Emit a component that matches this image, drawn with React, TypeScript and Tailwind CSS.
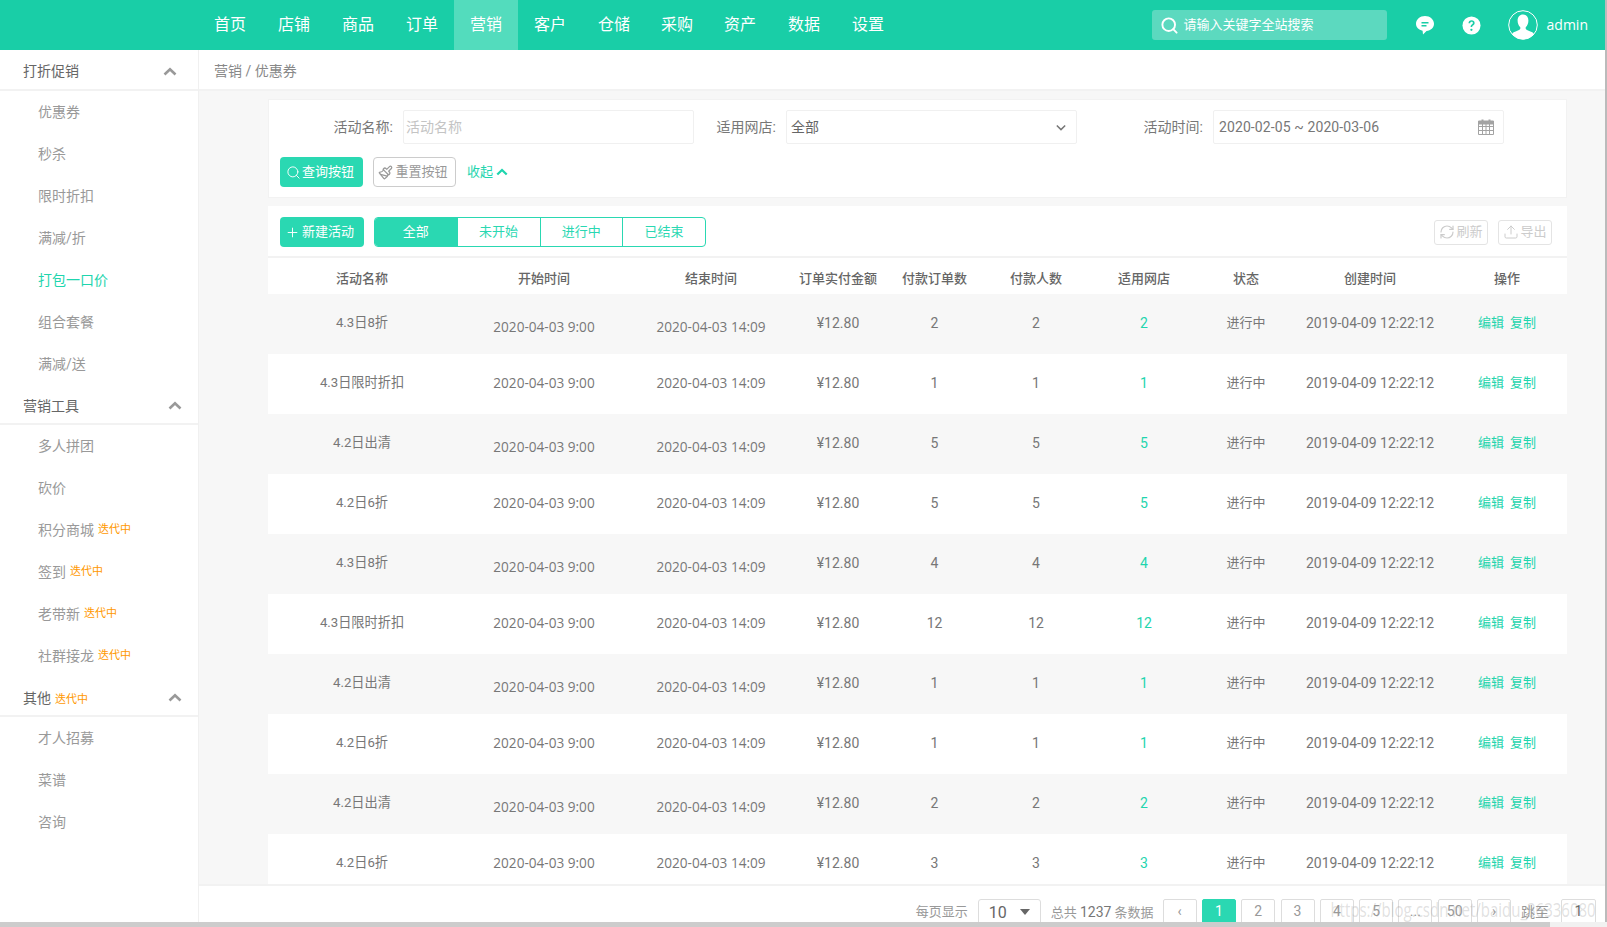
import { Search, RefreshCw, Upload, Plus, Paintbrush } from "lucide-react";

const font = "font-['Roboto','Noto_Sans_CJK_SC',sans-serif]";

const navItems = ["首页", "店铺", "商品", "订单", "营销", "客户", "仓储", "采购", "资产", "数据", "设置"];

type SideItem = { label: string; wip?: boolean; active?: boolean };
type SideGroup = { title: string; wip?: boolean; chevron: string; items: SideItem[] };

const sideGroups: SideGroup[] = [
    {
        title: "打折促销",
        chevron: "mr-[21px]",
        items: [
            { label: "优惠券" },
            { label: "秒杀" },
            { label: "限时折扣" },
            { label: "满减/折" },
            { label: "打包一口价", active: true },
            { label: "组合套餐" },
            { label: "满减/送" },
        ],
    },
    {
        title: "营销工具",
        chevron: "mr-[16px]",
        items: [
            { label: "多人拼团" },
            { label: "砍价" },
            { label: "积分商城", wip: true },
            { label: "签到", wip: true },
            { label: "老带新", wip: true },
            { label: "社群接龙", wip: true },
        ],
    },
    {
        title: "其他",
        wip: true,
        chevron: "mr-[16px]",
        items: [{ label: "才人招募" }, { label: "菜谱" }, { label: "咨询" }],
    },
];

const columns = [
    { title: "活动名称", width: "w-[188px]" },
    { title: "开始时间", width: "w-[176px]" },
    { title: "结束时间", width: "w-[158px]" },
    { title: "订单实付金额", width: "w-[96px]" },
    { title: "付款订单数", width: "w-[97px]" },
    { title: "付款人数", width: "w-[106px]" },
    { title: "适用网店", width: "w-[110px]" },
    { title: "状态", width: "w-[94px]" },
    { title: "创建时间", width: "w-[154px]" },
    { title: "操作", width: "w-[120px]" },
];

const rows = [
    { name: "4.3日8折", count: 2 },
    { name: "4.3日限时折扣", count: 1 },
    { name: "4.2日出清", count: 5 },
    { name: "4.2日6折", count: 5 },
    { name: "4.3日8折", count: 4 },
    { name: "4.3日限时折扣", count: 12 },
    { name: "4.2日出清", count: 1 },
    { name: "4.2日6折", count: 1 },
    { name: "4.2日出清", count: 2 },
    { name: "4.2日6折", count: 3 },
];

const pages = ["‹", "1", "2", "3", "4", "5", "...", "50", "›"];

function ChevronUp({ className }: { className?: string }) {
    return (
        <svg viewBox="0 0 14 9" className={className} fill="none" stroke="currentColor" strokeWidth="2.6">
            <path d="M1.5 7.5 7 2.2l5.5 5.3" />
        </svg>
    );
}

function Wip() {
    return <span className="ml-1 text-[11px] text-[#ff9800]">迭代中</span>;
}

function Sidebar() {
    return (
        <aside className="w-[199px] shrink-0 border-r border-[#f0f0f0] bg-white">
            {sideGroups.map((group, g) => (
                <div key={group.title}>
                    <div
                        className={`flex items-center justify-between border-b-2 border-[#f2f2f2] pl-[23px] pt-[3px] text-sm text-[#666] ${g === 0 ? "h-[41px]" : "h-[40px]"}`}
                    >
                        <span>
                            {group.title}
                            {group.wip && <Wip />}
                        </span>
                        <ChevronUp className={`h-[9px] w-[14px] text-[#999] ${group.chevron}`} />
                    </div>
                    {group.items.map((item) => (
                        <div
                            key={item.label}
                            className={`flex h-[42px] items-center pl-[38px] text-sm ${item.active ? "text-[#1fd5ae]" : "text-[#999]"}`}
                        >
                            {item.label}
                            {item.wip && <Wip />}
                        </div>
                    ))}
                </div>
            ))}
        </aside>
    );
}

function Header() {
    return (
        <header className="flex h-[50px] shrink-0 items-center bg-[#19cea7] text-white">
            <nav className="ml-[198px] flex h-full">
                {navItems.map((item) => (
                    <a
                        key={item}
                        className={`flex h-full items-center justify-center text-base ${item === "采购" ? "w-[62px]" : "w-[64px]"} ${item === "营销" ? "bg-[#53dcbd]" : ""}`}
                    >
                        {item}
                    </a>
                ))}
            </nav>
            <div className="ml-auto mr-[28px] flex h-[30px] w-[235px] items-center gap-[5px] rounded-[3px] bg-[#5cd9bf] pl-[8px] text-[13px]">
                <Search className="h-[19px] w-[19px]" strokeWidth={2.4} />
                请输入关键字全站搜索
            </div>
            <svg viewBox="0 0 20 20" className="mr-[27px] h-[20px] w-[20px]" fill="currentColor">
                <path d="M10 1c5 0 9 3.4 9 7.8 0 4-3.300 6.900-7.500 7.300L8 19.500l-.4-3.700C3.700 15 1 12.300 1 8.800 1 4.400 5 1 10 1z" />
                <path d="M6.500 7h7v1.400h-7zM6.500 10h5v1.400h-5z" fill="#19cea7" />
            </svg>
            <svg viewBox="0 0 20 20" className="mr-[27px] h-[19px] w-[19px]" fill="currentColor">
                <circle cx="10" cy="10" r="9.500" />
                <path
                    d="M6.800 7.600C6.900 5.600 8.200 4.500 10.100 4.500c1.900 0 3.200 1.100 3.200 2.800 0 1.300-.7 2-1.600 2.600-.8.500-1 .9-1 1.800H9.100c-.1-1.400.3-2.100 1.200-2.700.8-.5 1.200-.9 1.200-1.600 0-.8-.6-1.300-1.400-1.300-.9 0-1.500.6-1.500 1.500z"
                    fill="#19cea7"
                />
                <circle cx="9.900" cy="14.500" r="1.200" fill="#19cea7" />
            </svg>
            <svg viewBox="0 0 30 30" className="h-[30px] w-[30px]">
                <clipPath id="avatar-clip">
                    <circle cx="15" cy="15" r="14.300" />
                </clipPath>
                <circle cx="15" cy="15" r="14.300" fill="#19cea7" stroke="#fff" strokeWidth="1" />
                <path
                    clipPath="url(#avatar-clip)"
                    d="M15 4.500c3.300 0 5.400 2.600 5.400 6 0 2.600-1 5.300-2.700 6.700v1.600c0 1 3 2 5.300 3 2 .8 3 1.600 3 3.700V30H4v-4.500c0-2.100 1-2.900 3-3.700 2.300-1 5.300-2 5.300-3v-1.600c-1.700-1.400-2.700-4.100-2.700-6.700 0-3.400 2.100-6 5.400-6z"
                    fill="#fff"
                />
            </svg>
            <span className="ml-[9px] mr-[17px] font-['Open_Sans',sans-serif] text-sm">admin</span>
        </header>
    );
}

function SearchCard() {
    const box = "flex h-[34px] w-[291px] items-center rounded-[2px] border border-[#f0f0f0] text-sm";
    return (
        <section className="border border-[#f2f2f2] bg-white pb-[10px] pt-[10px]">
            <div className="flex items-center text-sm text-[#777]">
                <label className="w-[124px] text-right">活动名称:</label>
                <div className={`ml-[10px] px-[2px] text-[#c4c4c4] ${box}`}>活动名称</div>
                <label className="w-[82px] text-right">适用网店:</label>
                <div className={`ml-[10px] justify-between pl-[4px] pr-[10px] text-[#666] ${box}`}>
                    全部
                    <svg viewBox="0 0 12 8" className="h-[7px] w-[10px]" fill="none" stroke="#777" strokeWidth="1.800">
                        <path d="M1 1.500 6 6.500l5-5" />
                    </svg>
                </div>
                <label className="w-[126px] text-right">活动时间:</label>
                <div className={`ml-[10px] justify-between pl-[5px] pr-[9px] text-[#777] ${box}`}>
                    <span className="tracking-[0.1px]">2020-02-05 ~ 2020-03-06</span>
                    <svg viewBox="0 0 16 16" className="h-[16px] w-[16px]" fill="none" stroke="#a3a3a3" strokeWidth="1">
                        <path d="M.5 3.500h15v12H.5zM.5 7.500h15M.5 11.500h15M4.500 3.500v12M8 3.500v12M11.500 3.500v12" />
                        <path d="M.5 2h15v3H.5z" fill="#a3a3a3" />
                        <path d="M4.500.5v3M11.500.5v3" strokeWidth="2" />
                    </svg>
                </div>
            </div>
            <div className="ml-[11px] mt-[13px] flex h-[30px] items-center text-[13px]">
                <button className="flex h-full w-[83px] items-center justify-center gap-px rounded-[4px] bg-[#2ad8b2] pr-[3px] text-white">
                    <Search className="h-[15px] w-[15px]" strokeWidth={1.500} />
                    查询按钮
                </button>
                <button className="ml-[10px] flex h-full w-[83px] items-center justify-center gap-[2px] rounded-[4px] border border-[#ccc] pr-[3px] text-[#999]">
                    <Paintbrush className="h-[15px] w-[15px]" />
                    重置按钮
                </button>
                <a className="ml-[11px] flex items-center gap-[3px] text-[#1fd5ae]">
                    收起
                    <ChevronUp className="h-[8px] w-[12px]" />
                </a>
            </div>
        </section>
    );
}

function Toolbar() {
    const tabs = ["全部", "未开始", "进行中", "已结束"];
    return (
        <div className="flex h-[52px] items-center border-b-2 border-[#f2f2f2] pl-[12px] pr-[15px] pt-[2px]">
            <button className="flex h-[30px] w-[84px] items-center justify-center rounded-[4px] bg-[#2ad8b2] pr-[5px] text-[13px] text-white">
                <Plus className="mr-[2px] h-[15px] w-[15px]" strokeWidth={1.500} />
                新建活动
            </button>
            <div className="ml-[10px] flex h-[30px] w-[332px] overflow-hidden rounded-[4px] border border-[#2ad8b2] text-[13px] text-[#2ad8b2]">
                {tabs.map((tab, i) => (
                    <div
                        key={tab}
                        className={`flex flex-1 items-center justify-center ${i === 0 ? "bg-[#2ad8b2] text-white" : "border-l border-[#2ad8b2]"}`}
                    >
                        {tab}
                    </div>
                ))}
            </div>
            <button className="ml-auto flex h-[25px] w-[54px] items-center justify-center gap-px rounded-[3px] border border-[#e4e4e4] text-[13px] text-[#ccc]">
                <RefreshCw className="h-[16px] w-[16px]" strokeWidth={1.800} />
                刷新
            </button>
            <button className="ml-[10px] flex h-[25px] w-[54px] items-center justify-center gap-px rounded-[3px] border border-[#e4e4e4] text-[13px] text-[#ccc]">
                <Upload className="h-[16px] w-[16px]" strokeWidth={1.500} />
                导出
            </button>
        </div>
    );
}

function CouponTable() {
    return (
        <table className="w-full table-fixed text-center text-[13px] text-[#777]">
            <thead>
                <tr className="h-[36px] text-[13px] text-[#666]">
                    {columns.map((col) => (
                        <th key={col.title} className={`${col.width} pt-[6px] font-medium`}>
                            {col.title}
                        </th>
                    ))}
                </tr>
            </thead>
            <tbody>
                {rows.map((row, i) => {
                    const odd = i % 2 === 0;
                    const dateCell = `font-['Open_Sans',sans-serif] text-[13.6px] ${odd ? "pt-2" : ""}`;
                    return (
                        <tr key={i} className={`h-[60px] [&>td]:pb-[2px] ${odd ? "bg-[#f7f7f7]" : "bg-white"}`}>
                            <td className="text-[13.2px]">{row.name}</td>
                            <td className={dateCell}>2020-04-03 9:00</td>
                            <td className={dateCell}>2020-04-03 14:09</td>
                            <td className="text-sm">¥12.80</td>
                            <td className="text-sm">{row.count}</td>
                            <td className="text-sm">{row.count}</td>
                            <td className="text-sm text-[#1fd5ae]">{row.count}</td>
                            <td>进行中</td>
                            <td className="text-sm">2019-04-09 12:22:12</td>
                            <td className="text-[#1fd5ae]">
                                <a>编辑</a>
                                <a className="ml-[6px]">复制</a>
                            </td>
                        </tr>
                    );
                })}
            </tbody>
        </table>
    );
}

function Pager() {
    return (
        <footer className="relative flex h-[38px] shrink-0 items-start justify-end border-t-2 border-[#f2f2f2] bg-white pr-[9px] pt-[13px] text-[13px] text-[#999]">
            <span className="mr-[10px] mt-[3px]">每页显示</span>
            <div className="flex h-[30px] w-[63px] items-start justify-between rounded-[3px] border border-[#ddd] px-[10px] pt-[1px] text-base text-[#666]">
                10
                <span className="mt-[8px] h-0 w-0 border-x-[5px] border-t-[6px] border-x-transparent border-t-[#666]" />
            </div>
            <span className="ml-[10px] mr-[9px] mt-[3px]">
                总共 <span className="text-sm text-[#777]">1237</span> 条数据
            </span>
            <div className="flex gap-[5.3px] text-sm">
                {pages.map((page) => (
                    <div
                        key={page}
                        className={`flex h-[30px] w-[34px] items-start justify-center rounded-[2px] border pt-[1px] ${page === "1" ? "border-[#2ad8b2] bg-[#2ad8b2] text-white" : "border-[#ddd]"}`}
                    >
                        {page}
                    </div>
                ))}
            </div>
            <span className="ml-[10px] mt-[3px] text-sm">跳至</span>
            <div className="ml-[12px] flex h-[30px] w-[35px] items-start justify-center rounded-[2px] border border-[#ddd] pt-[1px] text-sm text-[#666]">
                1
            </div>
            <span className="absolute right-[9px] top-[10px] origin-right scale-x-75 font-['Open_Sans',sans-serif] text-xl text-[#999]/30">
                https://blog.csdn.net/baidu_36336080
            </span>
        </footer>
    );
}

export default function App() {
    return (
        <div className={`flex h-screen w-full flex-col overflow-hidden bg-white ${font}`}>
            <div className="flex min-h-0 flex-1 flex-col overflow-hidden border-r-2 border-[#bbb]">
                <Header />
                <div className="flex min-h-0 flex-1">
                    <Sidebar />
                    <main className="flex min-w-0 flex-1 flex-col">
                        <div className="flex h-[41px] shrink-0 items-center border-b-2 border-[#f2f2f2] bg-white pl-[15px] pt-[2px] text-sm text-[#888]">
                            营销 / 优惠券
                        </div>
                        <div className="flex min-h-0 flex-1 flex-col gap-[8px] overflow-hidden bg-[#f7f7f7] pb-0 pl-[69px] pr-[38px] pt-[8px]">
                            <SearchCard />
                            <section className="bg-white">
                                <Toolbar />
                                <CouponTable />
                            </section>
                        </div>
                        <Pager />
                    </main>
                </div>
            </div>
            <div className="h-[5px] shrink-0 bg-[#f1f1f1]">
                <div className="h-full w-[1550px] bg-[#ccc]" />
            </div>
        </div>
    );
}
